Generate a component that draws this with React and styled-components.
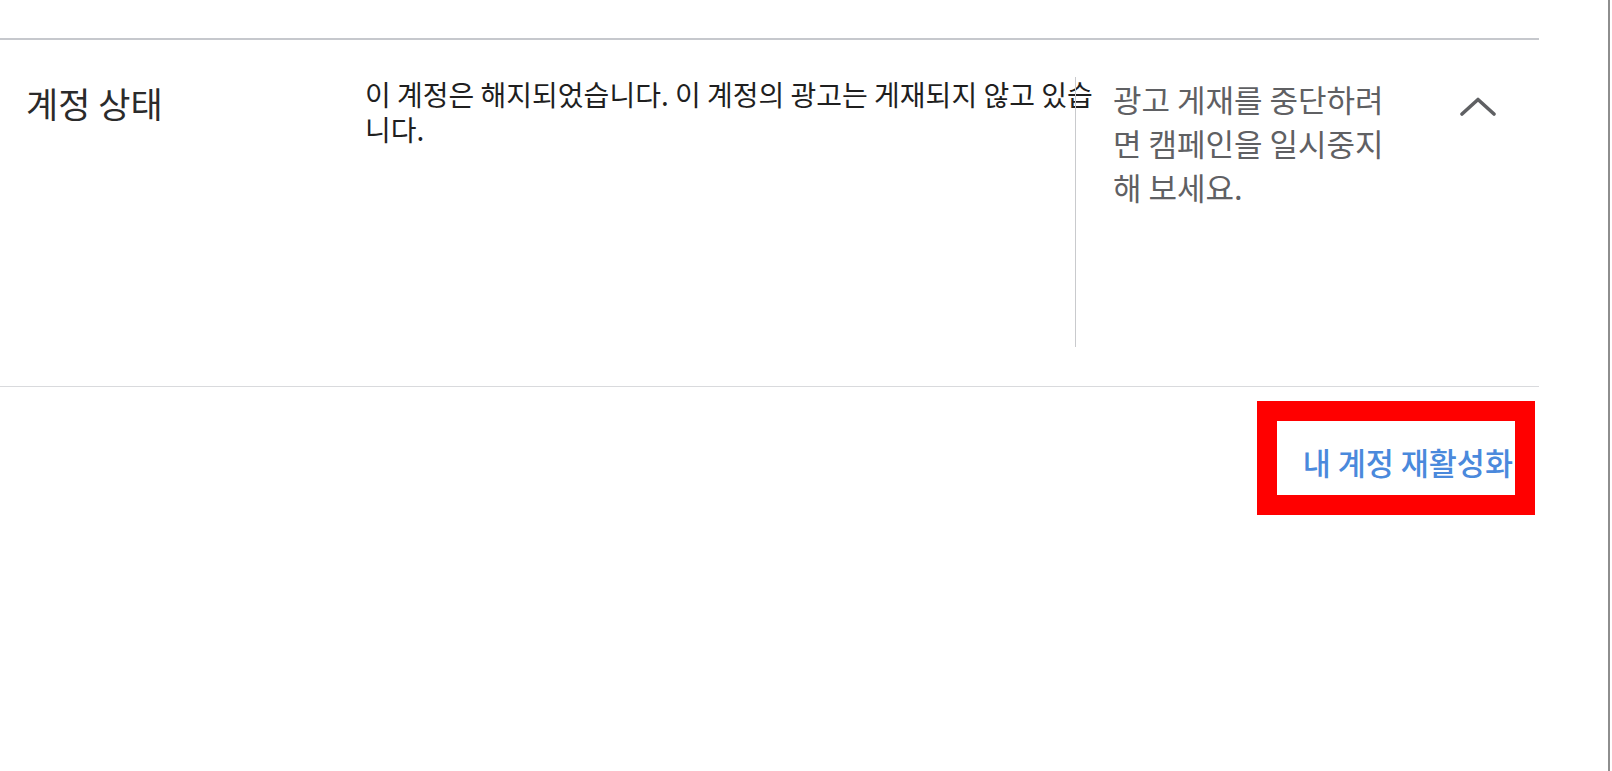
import React from "react";
import styled, { createGlobalStyle } from "styled-components";

const GlobalStyle = createGlobalStyle`
  html, body {
    margin: 0;
    padding: 0;
    background: #ffffff;
  }
  body {
    font-family: "Noto Sans CJK KR", "Noto Sans", sans-serif;
  }
`;

const Page = styled.div`
  box-sizing: border-box;
  width: 1610px;
  height: 771px;
  padding-top: 38px;
  border-right: 2px solid #8e8e8e;
  background: #ffffff;
`;

const Card = styled.section`
  width: 1539px;
  border-top: 2px solid #c6c8cd;
  border-bottom: 1px solid #d9dadd;
  background: #ffffff;
`;

const Row = styled.div`
  display: flex;
  align-items: flex-start;
  padding: 37px 0 39px;
`;

const Title = styled.h2`
  box-sizing: border-box;
  width: 365px;
  flex: none;
  margin: 6px 0 0;
  padding-left: 26px;
  font-size: 35px;
  line-height: 40px;
  font-weight: 400;
  color: #2b2b2b;
`;

const Message = styled.p`
  width: 710px;
  flex: none;
  margin: 0;
  font-size: 28px;
  line-height: 35px;
  color: #1f1f1f;
  white-space: nowrap;
`;

const Divider = styled.div`
  width: 1px;
  height: 270px;
  flex: none;
  background: #c9cacd;
`;

const Hint = styled.p`
  width: 285px;
  flex: none;
  margin: 0 0 0 37px;
  font-size: 31px;
  line-height: 44px;
  color: #5f6063;
`;

const Toggle = styled.button`
  display: flex;
  flex: none;
  margin: 20px 0 0 62px;
  padding: 0;
  border: 0;
  background: none;
  cursor: pointer;
`;

const Actions = styled.div`
  display: flex;
  justify-content: flex-end;
  width: 1535px;
  margin-top: 14px;
`;

const Reactivate = styled.button`
  box-sizing: content-box;
  width: 236px;
  padding: 24px 2px 16px 0;
  border: 20px solid #ff0000;
  background: #ffffff;
  font-family: "Noto Sans CJK KR", "Noto Sans", sans-serif;
  font-size: 30.5px;
  line-height: 34px;
  font-weight: 500;
  color: #4a89dc;
  text-align: right;
  white-space: nowrap;
  cursor: pointer;
`;

function ChevronUp() {
  return (
    <svg width="36" height="19" viewBox="0 0 36 19" fill="none">
      <polyline
        points="2,17 18,2.5 34,17"
        stroke="#5f6063"
        strokeWidth="3.6"
        strokeLinecap="round"
        strokeLinejoin="round"
      />
    </svg>
  );
}

export default function App() {
  return (
    <>
      <GlobalStyle />
      <Page>
        <Card>
          <Row>
            <Title>계정 상태</Title>
            <Message>
              이 계정은 해지되었습니다. 이 계정의 광고는 게재되지 않고 있습
              <br />
              니다.
            </Message>
            <Divider />
            <Hint>광고 게재를 중단하려면 캠페인을 일시중지해 보세요.</Hint>
            <Toggle aria-label="접기">
              <ChevronUp />
            </Toggle>
          </Row>
        </Card>
        <Actions>
          <Reactivate>내 계정 재활성화</Reactivate>
        </Actions>
      </Page>
    </>
  );
}
